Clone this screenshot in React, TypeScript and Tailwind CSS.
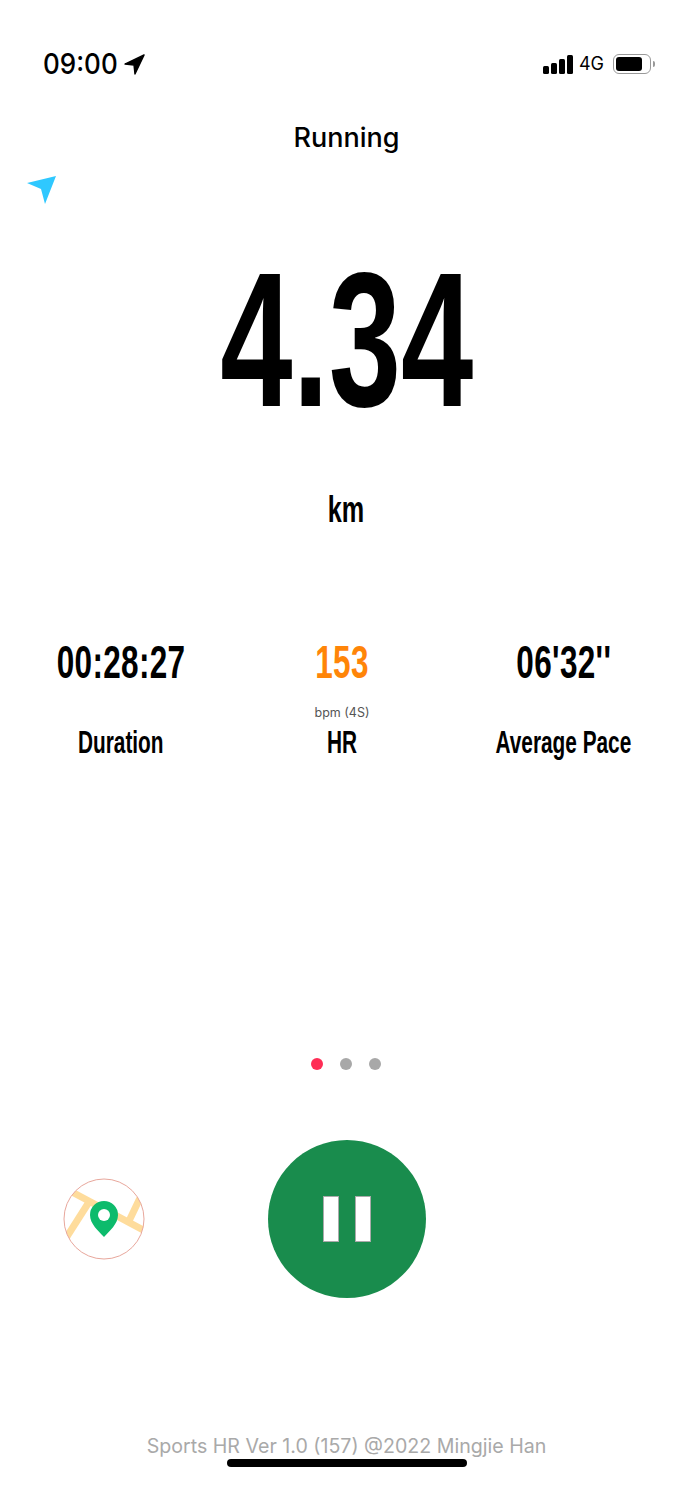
const stats = [
  { value: '00:28:27', label: 'Duration', color: 'text-black', hint: '' },
  { value: '153', label: 'HR', color: 'text-[#ff8508]', hint: 'bpm (4S)' },
  { value: "06'32''", label: 'Average Pace', color: 'text-black', hint: '' },
];

function StatusBar() {
  return (
    <div className="flex h-[28px] items-center justify-between pl-[43px] pr-[38px]">
      <div className="flex items-center">
        <span className="w-[81px] origin-left scale-x-[0.93] whitespace-nowrap font-['Inter',sans-serif] text-[28px] font-medium leading-none text-black">09:00</span>
        <svg width="21" height="21" viewBox="0 0 22 22">
          <path d="M21 1 L1 10.5 L10.5 11.5 L11.5 21 Z" fill="#000" stroke="#000" strokeWidth="1.5" strokeLinejoin="round" />
        </svg>
      </div>
      <div className="flex items-center">
        <div className="flex items-end gap-[2px]">
          <div className="h-[8px] w-[6px] rounded-[1.5px] bg-black" />
          <div className="h-[11px] w-[6px] rounded-[1.5px] bg-black" />
          <div className="h-[15px] w-[6px] rounded-[1.5px] bg-black" />
          <div className="h-[19px] w-[6px] rounded-[1.5px] bg-black" />
        </div>
        <span className="ml-[6px] font-['Inter',sans-serif] text-[18px] leading-none text-black">4G</span>
        <div className="ml-[9px] flex h-[20px] w-[38px] items-center rounded-[6px] border border-[#999] p-[2px]">
          <div className="h-full w-[26px] rounded-[3px] bg-black" />
        </div>
        <div className="ml-[2px] h-[6px] w-[2px] rounded-r-full bg-[#999]" />
      </div>
    </div>
  );
}

function MapIcon() {
  return (
    <svg width="82" height="82" viewBox="0 0 82 82">
      <defs>
        <clipPath id="mapClip">
          <circle cx="41" cy="41" r="40" />
        </clipPath>
      </defs>
      <g clipPath="url(#mapClip)" fill="none" stroke="#fedc9c" strokeWidth="7">
        <path d="M9 14 L80 52" />
        <path d="M26 24 L3 60" />
        <path d="M77 20 L66 43" />
      </g>
      <circle cx="41" cy="41" r="40" fill="none" stroke="#e8a79c" strokeWidth="1" />
      <path d="M41 59 C35.5 53 27 46 27 37 A14 14 0 0 1 55 37 C55 46 46.5 53 41 59 Z" fill="#0dbb6c" />
      <circle cx="41" cy="37" r="6" fill="#fff" />
    </svg>
  );
}

export default function App() {
  return (
    <div className="flex h-[1500px] w-[693px] flex-col overflow-hidden bg-white">
      <div className="pt-[50px]">
        <StatusBar />
      </div>

      <h1 className="mt-[44px] text-center font-['Inter',sans-serif] text-[27px] font-medium leading-[32px] text-black">Running</h1>

      <svg className="ml-[27px] mt-[22px] block" width="30" height="29" viewBox="0 0 30 29">
        <path d="M0 7 L29 0 L18 28 L14 13 Z" fill="#2fc8ff" />
      </svg>

      <div className="mt-[25px] flex justify-center">
        <span className="scale-x-[0.677] font-['Liberation_Sans_Narrow',sans-serif] text-[192px] font-bold leading-[220px] text-black">4.34</span>
      </div>

      <div className="mt-[38px] text-center">
        <span className="inline-block scale-x-[0.7] font-['Liberation_Sans_Narrow',sans-serif] text-[36px] font-bold leading-[44px] text-black">km</span>
      </div>

      <div className="mt-[102px] grid grid-cols-3 pl-[10px] pr-[19px]">
        {stats.map((s) => (
          <div key={s.label} className="flex flex-col items-center">
            <span className={`scale-x-[0.67] whitespace-nowrap font-['Liberation_Sans_Narrow',sans-serif] text-[47px] font-bold leading-[56px] tracking-[0.5px] ${s.color}`}>{s.value}</span>
            <span className="mt-[16px] h-[14px] font-['Inter',sans-serif] text-[12.5px] leading-[14px] text-[#555]">{s.hint}</span>
            <span className="mt-[4px] scale-x-[0.65] whitespace-nowrap font-['Liberation_Sans_Narrow',sans-serif] text-[32px] font-bold leading-[36px] text-black">{s.label}</span>
          </div>
        ))}
      </div>

      <div className="mt-[298px] flex justify-center gap-[17px] pr-[1px]">
        <div className="h-[12px] w-[12px] rounded-full bg-[#ff2d55]" />
        <div className="h-[12px] w-[12px] rounded-full bg-[#a8a8a8]" />
        <div className="h-[12px] w-[12px] rounded-full bg-[#a8a8a8]" />
      </div>

      <div className="mt-[70px] flex items-center pl-[63px]">
        <MapIcon />
        <div className="ml-[123px] flex h-[158px] w-[158px] items-center justify-center gap-[16px] rounded-full bg-[#198c4d]">
          <div className="h-[46px] w-[16px] border border-[#aaa] bg-white" />
          <div className="h-[46px] w-[16px] border border-[#aaa] bg-white" />
        </div>
      </div>

      <div className="mt-[136px] text-center font-['Inter',sans-serif] text-[19.6px] leading-[24px] text-[#a9a9a9]">Sports HR Ver 1.0 (157) @2022 Mingjie Han</div>

      <div className="ml-[227px] mt-[1px] h-[8px] w-[240px] rounded-full bg-black" />
    </div>
  );
}
